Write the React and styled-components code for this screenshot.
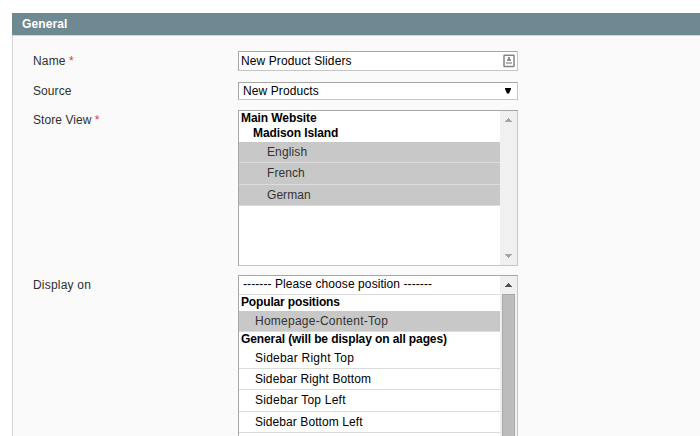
import React from "react";
import styled, { createGlobalStyle } from "styled-components";

const GlobalStyle = createGlobalStyle`
  * { box-sizing: border-box; }
  html, body { margin: 0; padding: 0; background: #fff; overflow: hidden; }
  body { font: 12px/15px "Liberation Sans", Arial, sans-serif; color: #2f2f2f; }
`;

const Page = styled.main`
  height: 436px;
  padding: 13px 0 0 12px;
  overflow: hidden;
  display: flex;
  flex-direction: column;
`;

const SectionHeader = styled.h4`
  flex: none;
  height: 22px;
  margin: 0;
  padding: 3px 10px 0;
  background: #6f8992;
  color: #fff;
  font-size: 12px;
  line-height: 16px;
  letter-spacing: 0.1px;
`;

const Fieldset = styled.section`
  flex: 1;
  min-height: 0;
  overflow: hidden;
  padding: 15px 0 0 20px;
  background: #fafafa;
  border-top: 1px solid #d6d6d6;
  border-left: 1px solid #d6d6d6;
`;

const Field = styled.div`
  display: grid;
  grid-template-columns: 205px 280px;
  align-items: start;
  margin-bottom: ${(p) => p.$gap}px;
`;

const Label = styled.label`
  padding-top: ${(p) => p.$top}px;
  white-space: nowrap;
  letter-spacing: ${(p) => p.$tracking || 0}px;
`;

const Required = styled.span`
  color: #d9403f;
`;

const Control = styled.div`
  display: flex;
  align-items: center;
  justify-content: space-between;
  height: ${(p) => p.$height}px;
  padding: 0 ${(p) => p.$right}px 0 ${(p) => p.$left}px;
  background: #fff;
  border: 1px solid #c6c6c6;
  border-top-color: #a6a6a6;
  border-left-color: #a6a6a6;
  color: #000;
  white-space: nowrap;
  letter-spacing: 0.1px;

  svg { display: block; flex: none; }
`;

const ListBox = styled.div`
  display: flex;
  height: ${(p) => p.$height}px;
  background: #fff;
  border: 1px solid #c6c6c6;
  border-top-color: #a6a6a6;
  border-left-color: #a6a6a6;
  color: #000;
`;

const Options = styled.div`
  flex: 1;
  overflow: hidden;
`;

const Group = styled.div`
  height: ${(p) => p.$height}px;
  padding-left: ${(p) => p.$indent}px;
  font-weight: bold;
  line-height: 15px;
  white-space: nowrap;
  letter-spacing: ${(p) => p.$tracking || 0}px;
`;

const Option = styled.div`
  height: ${(p) => p.$height}px;
  padding-left: ${(p) => p.$indent}px;
  line-height: ${(p) => p.$line || 20}px;
  white-space: nowrap;
  background: ${(p) => (p.$selected ? "#c8c8c8" : "#fff")};
  color: ${(p) => (p.$selected ? "#333" : "#000")};
  border-bottom: 1px solid #dcdcdc;
  letter-spacing: ${(p) => p.$tracking || 0}px;
`;

const ScrollTrack = styled.div`
  width: 17px;
  display: flex;
  flex-direction: column;
  justify-content: space-between;
  align-items: center;
  background: #f0f0f0;
  padding-bottom: ${(p) => (p.$thumb ? 0 : 7)}px;

  svg { display: block; flex: none; margin-top: 7px; }
`;

const Thumb = styled.div`
  flex: 1;
  width: 13px;
  margin-top: 7px;
  background: #bcbcbc;
  border: 1px solid #a8a8a8;
`;

const Triangle = ({ color, down }) => (
  <svg width="7" height="4" viewBox="0 0 7 4" shapeRendering="crispEdges">
    <path d={down ? "M0 0h7v1H6v1H5v1H4v1H3V3H2V2H1V1H0z" : "M3 0h1v1h1v1h1v1h1v1H0V3h1V2h1V1h1z"} fill={color} />
  </svg>
);

const ContactIcon = () => (
  <svg width="12" height="14" viewBox="0 0 12 14">
    <rect x="1" y="1.2" width="10" height="11.3" rx=".5" fill="#fff" stroke="#858585" strokeWidth="1.5" />
    <path d="M5 3h2v2h1v2H4V5h1z" fill="#929292" />
    <path d="M3 8h6v2H3z" fill="#b5b5b5" />
  </svg>
);

const SelectArrow = () => (
  <svg width="6" height="6" viewBox="0 0 6 6">
    <path d="M0 0h6v1L4 5.5H2L0 1z" fill="#000" />
  </svg>
);

const stores = [
  { name: "English", height: 21, tracking: 0.12 },
  { name: "French", height: 22, tracking: 0.08 },
  { name: "German", height: 21, tracking: 0.05 },
];

const positions = [
  { name: "Sidebar Right Top", height: 21, tracking: 0.23 },
  { name: "Sidebar Right Bottom", height: 21, tracking: 0.1 },
  { name: "Sidebar Top Left", height: 22, tracking: 0.22 },
  { name: "Sidebar Bottom Left", height: 21, tracking: 0.08 },
];

export default function App() {
  return (
    <>
      <GlobalStyle />
      <Page>
        <SectionHeader>General</SectionHeader>
        <Fieldset>
          <Field $gap={11}>
            <Label $top={3} $tracking={0.15}>Name <Required>*</Required></Label>
            <Control $height={20} $left={2} $right={2}>New Product Sliders<ContactIcon /></Control>
          </Field>
          <Field $gap={10}>
            <Label $top={2} $tracking={0.08}>Source</Label>
            <Control $height={18} $left={4} $right={6}>New Products<SelectArrow /></Control>
          </Field>
          <Field $gap={9}>
            <Label $top={3} $tracking={0.06}>Store View <Required>*</Required></Label>
            <ListBox $height={156}>
              <Options>
                <Group $height={15} $indent={2} $tracking={-0.08}>Main Website</Group>
                <Group $height={16} $indent={14} $tracking={-0.1}>Madison Island</Group>
                {stores.map((s) => (
                  <Option key={s.name} $height={s.height} $indent={28} $tracking={s.tracking} $selected>{s.name}</Option>
                ))}
              </Options>
              <ScrollTrack>
                <Triangle color="#a3a3a3" />
                <Triangle color="#a3a3a3" down />
              </ScrollTrack>
            </ListBox>
          </Field>
          <Field $gap={0}>
            <Label $top={3} $tracking={0.2}>Display on</Label>
            <ListBox $height={180}>
              <Options>
                <Option $height={19} $indent={4} $line={17} $tracking={0.08}>------- Please choose position -------</Option>
                <Group $height={16} $indent={2} $tracking={-0.15}>Popular positions</Group>
                <Option $height={21} $indent={16} $tracking={0.25} $selected>Homepage-Content-Top</Option>
                <Group $height={16} $indent={2} $tracking={-0.11}>General (will be display on all pages)</Group>
                {positions.map((p) => (
                  <Option key={p.name} $height={p.height} $indent={16} $tracking={p.tracking}>{p.name}</Option>
                ))}
              </Options>
              <ScrollTrack $thumb>
                <Triangle color="#505050" />
                <Thumb />
              </ScrollTrack>
            </ListBox>
          </Field>
        </Fieldset>
      </Page>
    </>
  );
}
